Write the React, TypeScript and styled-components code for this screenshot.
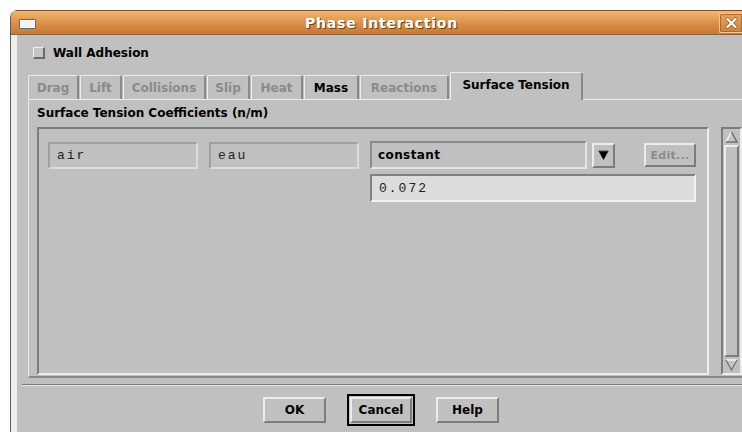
import React from "react";
import styled, { createGlobalStyle, css } from "styled-components";

const GlobalStyle = createGlobalStyle`
  html, body { margin: 0; padding: 0; background: #ffffff; overflow: hidden; }
  body { font-family: "DejaVu Sans", "Liberation Sans", sans-serif; }
  * { box-sizing: border-box; }
`;

const FACE = "#c0c0c0";
const LIGHT = "#ececec";
const DARK = "#7c7c7c";

const raised = css`
  border-style: solid;
  border-width: 2px;
  border-color: ${LIGHT} ${DARK} ${DARK} ${LIGHT};
`;

const sunken = css`
  border-style: solid;
  border-width: 2px;
  border-color: ${DARK} ${LIGHT} ${LIGHT} ${DARK};
`;

const Window = styled.div`
  margin: 10px 0 0 10px;
  width: 732px;
  height: 422px;
  display: flex;
  flex-direction: column;
  border-top-left-radius: 8px;
  border-left: 1px solid #5c5c5c;
  overflow: hidden;
  background: ${FACE};
`;

const TitleBar = styled.div`
  height: 25px;
  flex: none;
  display: grid;
  grid-template-columns: auto 1fr auto;
  align-items: center;
  padding-left: 8px;
  background: linear-gradient(to bottom, #f1b877 0%, #e29c56 35%, #d3863f 70%, #c77a36 100%);
  border-top: 1px solid #7d4f26;
  border-bottom: 1px solid #94622f;
`;

const WindowIcon = styled.div`
  width: 17px;
  height: 10px;
  margin-top: 2px;
  background: #f4f4f4;
  border: 1px solid #6a6a6a;
  border-radius: 1px;
`;

const Title = styled.div`
  text-align: center;
  padding-left: 8px;
  font-weight: bold;
  font-size: 14px;
  letter-spacing: 0.8px;
  color: #ffffff;
  text-shadow: 1px 1px 0 #6e421a;
`;

const CloseButton = styled.div`
  width: 23px;
  height: 20px;
  display: flex;
  align-items: center;
  justify-content: center;
  background: linear-gradient(to bottom, #e7a25f, #cf823c);
  border: 1px solid #f2c699;
  border-right: none;
  border-radius: 2px 0 0 2px;
  box-shadow: inset 0 0 0 1px #b06a2c;
`;

const Body = styled.div`
  flex: 1;
  display: flex;
  flex-direction: column;
  border-left: 6px solid #eeeeea;
  padding-top: 8px;
`;

const CheckRow = styled.label`
  height: 19px;
  display: flex;
  align-items: center;
  gap: 8px;
  padding-left: 16px;
  font-size: 12px;
  font-weight: bold;
  color: #000;
`;

const CheckBox = styled.span`
  width: 12px;
  height: 12px;
  background: #c6c6c6;
  border-style: solid;
  border-width: 1px 2px 2px 1px;
  border-color: #f0f0f0 #6c6c6c #6c6c6c #f0f0f0;
`;

const TabRow = styled.div`
  height: 27px;
  margin-top: 10px;
  padding-left: 11px;
  display: flex;
  align-items: flex-end;
  gap: 1px;
  position: relative;
  z-index: 1;
`;

const Tab = styled.div<{ $w: number; $active?: boolean; $disabled?: boolean }>`
  width: ${(p) => p.$w}px;
  height: ${(p) => (p.$active ? 28 : 24)}px;
  margin-bottom: ${(p) => (p.$active ? -1 : 0)}px;
  display: flex;
  align-items: center;
  justify-content: center;
  background: ${FACE};
  border-top: 1px solid ${LIGHT};
  border-left: 1px solid ${LIGHT};
  border-right: 2px solid #8a8a8a;
  border-radius: 2px 3px 0 0;
  font-size: 12px;
  font-weight: bold;
  color: ${(p) => (p.$disabled ? "#8a8a8a" : "#000")};
  padding-bottom: ${(p) => (p.$active ? 3 : 0)}px;
`;

const Panel = styled.div`
  margin-left: 11px;
  display: flex;
  flex-direction: column;
  border-top: 1px solid ${LIGHT};
  border-left: 1px solid ${LIGHT};
  border-bottom: 2px solid #8a8a8a;
  padding: 0 0 1px 8px;
`;

const GroupLabel = styled.div`
  padding-top: 5px;
  height: 22px;
  line-height: 16px;
  font-size: 12px;
  font-weight: bold;
  color: #000;
`;

const ListRow = styled.div`
  margin-top: 5px;
  height: 248px;
  display: flex;
  gap: 12px;
`;

const Frame = styled.div`
  flex: 1;
  ${sunken};
  padding: 12px 0 0 9px;
`;

const Grid = styled.div`
  display: grid;
  grid-template-columns: 150px 150px 326px;
  grid-template-rows: 28px 28px;
  column-gap: 11px;
  row-gap: 5px;
  align-items: center;
`;

const NameField = styled.div`
  height: 27px;
  display: flex;
  align-items: center;
  padding-left: 7px;
  border-style: solid;
  border-width: 2px;
  border-color: #a0a0a0 #dcdcdc #dcdcdc #a0a0a0;
  font-family: "Liberation Mono", "DejaVu Sans Mono", monospace;
  font-size: 13px;
  letter-spacing: 2px;
  color: #222;
`;

const ComboLine = styled.div`
  display: flex;
  align-items: center;
  gap: 5px;
`;

const Select = styled.div`
  width: 217px;
  height: 28px;
  display: flex;
  align-items: center;
  padding-left: 6px;
  ${sunken};
  border-color: #8c8c8c #e4e4e4 #e4e4e4 #8c8c8c;
  font-size: 12px;
  font-weight: bold;
  letter-spacing: 0.4px;
  color: #000;
`;

const ArrowButton = styled.div`
  width: 23px;
  height: 25px;
  display: flex;
  align-items: center;
  justify-content: center;
  ${raised};
`;

const EditButton = styled.div`
  margin-left: auto;
  width: 52px;
  height: 24px;
  display: flex;
  align-items: center;
  justify-content: center;
  ${raised};
  font-size: 11px;
  font-weight: bold;
  letter-spacing: 0.3px;
  color: #8a8a8a;
`;

const ValueField = styled.div`
  grid-column: 3;
  height: 28px;
  display: flex;
  align-items: center;
  padding-left: 7px;
  background: #dcdcdc;
  ${sunken};
  border-color: #808080 #f2f2f2 #f2f2f2 #808080;
  font-family: "Liberation Mono", "DejaVu Sans Mono", monospace;
  font-size: 13px;
  letter-spacing: 2px;
  color: #222;
`;

const ScrollBar = styled.div`
  width: 21px;
  display: flex;
  flex-direction: column;
  ${sunken};
  padding: 1px;
`;

const ScrollArrow = styled.div`
  height: 14px;
  flex: none;
  display: flex;
  align-items: center;
  justify-content: center;
`;

const ScrollThumb = styled.div`
  flex: 1;
  margin: 1px 0;
  ${raised};
`;

const Separator = styled.div`
  margin: 6px 0 0 5px;
  border-top: 1px solid #7a7a7a;
  border-bottom: 1px solid #e6e6e6;
`;

const ButtonRow = styled.div`
  margin-top: 8px;
  height: 32px;
  display: flex;
  align-items: center;
  justify-content: center;
  gap: 21px;
  padding-left: 3px;
`;

const Button = styled.div<{ $w: number }>`
  width: ${(p) => p.$w}px;
  height: 26px;
  display: flex;
  align-items: center;
  justify-content: center;
  ${raised};
  font-size: 12px;
  font-weight: bold;
  color: #000;
`;

const DefaultRing = styled.div`
  border: 2px solid #000;
  padding: 1px;
`;

const DownTriangle = () => (
  <svg width="11" height="11" viewBox="0 0 11 11">
    <polygon points="0.5,1 10.5,1 5.5,10" fill="#000" />
    <polyline points="0.5,1 10.5,1" stroke="#555" strokeWidth="1" fill="none" />
  </svg>
);

const UpArrow = () => (
  <svg width="13" height="12" viewBox="0 0 13 12">
    <polygon points="6.5,1 12,11 1,11" fill="#c4c4c4" />
    <polyline points="1,11 6.5,1" stroke="#f4f4f4" strokeWidth="1.5" fill="none" />
    <polyline points="6.5,1 12,11 1,11" stroke="#707070" strokeWidth="1.5" fill="none" />
  </svg>
);

const DownArrow = () => (
  <svg width="13" height="12" viewBox="0 0 13 12">
    <polygon points="1,1 12,1 6.5,11" fill="#c4c4c4" />
    <polyline points="1,1 12,1" stroke="#f4f4f4" strokeWidth="1.5" fill="none" />
    <polyline points="1,1 6.5,11 12,1" stroke="#707070" strokeWidth="1.2" fill="none" />
  </svg>
);

const CloseGlyph = () => (
  <svg width="13" height="12" viewBox="0 0 13 12">
    <path d="M2.5 2 L10.5 10 M10.5 2 L2.5 10" stroke="#8a4f1e" strokeWidth="3.6" strokeLinecap="round" />
    <path d="M2.5 2 L10.5 10 M10.5 2 L2.5 10" stroke="#ffffff" strokeWidth="2.4" strokeLinecap="round" />
  </svg>
);

const tabs = [
  { label: "Drag", w: 51, disabled: true },
  { label: "Lift", w: 42, disabled: true },
  { label: "Collisions", w: 83, disabled: true },
  { label: "Slip", w: 43, disabled: true },
  { label: "Heat", w: 52, disabled: true },
  { label: "Mass", w: 55, disabled: false },
  { label: "Reactions", w: 89, disabled: true },
  { label: "Surface Tension", w: 133, disabled: false, active: true },
];

export default function App() {
  return (
    <>
      <GlobalStyle />
      <Window>
        <TitleBar>
          <WindowIcon />
          <Title>Phase Interaction</Title>
          <CloseButton>
            <CloseGlyph />
          </CloseButton>
        </TitleBar>
        <Body>
          <CheckRow>
            <CheckBox />
            Wall Adhesion
          </CheckRow>
          <TabRow>
            {tabs.map((t) => (
              <Tab key={t.label} $w={t.w} $active={t.active} $disabled={t.disabled}>
                {t.label}
              </Tab>
            ))}
          </TabRow>
          <Panel>
            <GroupLabel>Surface Tension Coefficients (n/m)</GroupLabel>
            <ListRow>
              <Frame>
                <Grid>
                  <NameField>air</NameField>
                  <NameField>eau</NameField>
                  <ComboLine>
                    <Select>constant</Select>
                    <ArrowButton>
                      <DownTriangle />
                    </ArrowButton>
                    <EditButton>Edit...</EditButton>
                  </ComboLine>
                  <ValueField>0.072</ValueField>
                </Grid>
              </Frame>
              <ScrollBar>
                <ScrollArrow>
                  <UpArrow />
                </ScrollArrow>
                <ScrollThumb />
                <ScrollArrow>
                  <DownArrow />
                </ScrollArrow>
              </ScrollBar>
            </ListRow>
          </Panel>
          <Separator />
          <ButtonRow>
            <Button $w={63}>OK</Button>
            <DefaultRing>
              <Button $w={62}>Cancel</Button>
            </DefaultRing>
            <Button $w={63}>Help</Button>
          </ButtonRow>
        </Body>
      </Window>
    </>
  );
}
